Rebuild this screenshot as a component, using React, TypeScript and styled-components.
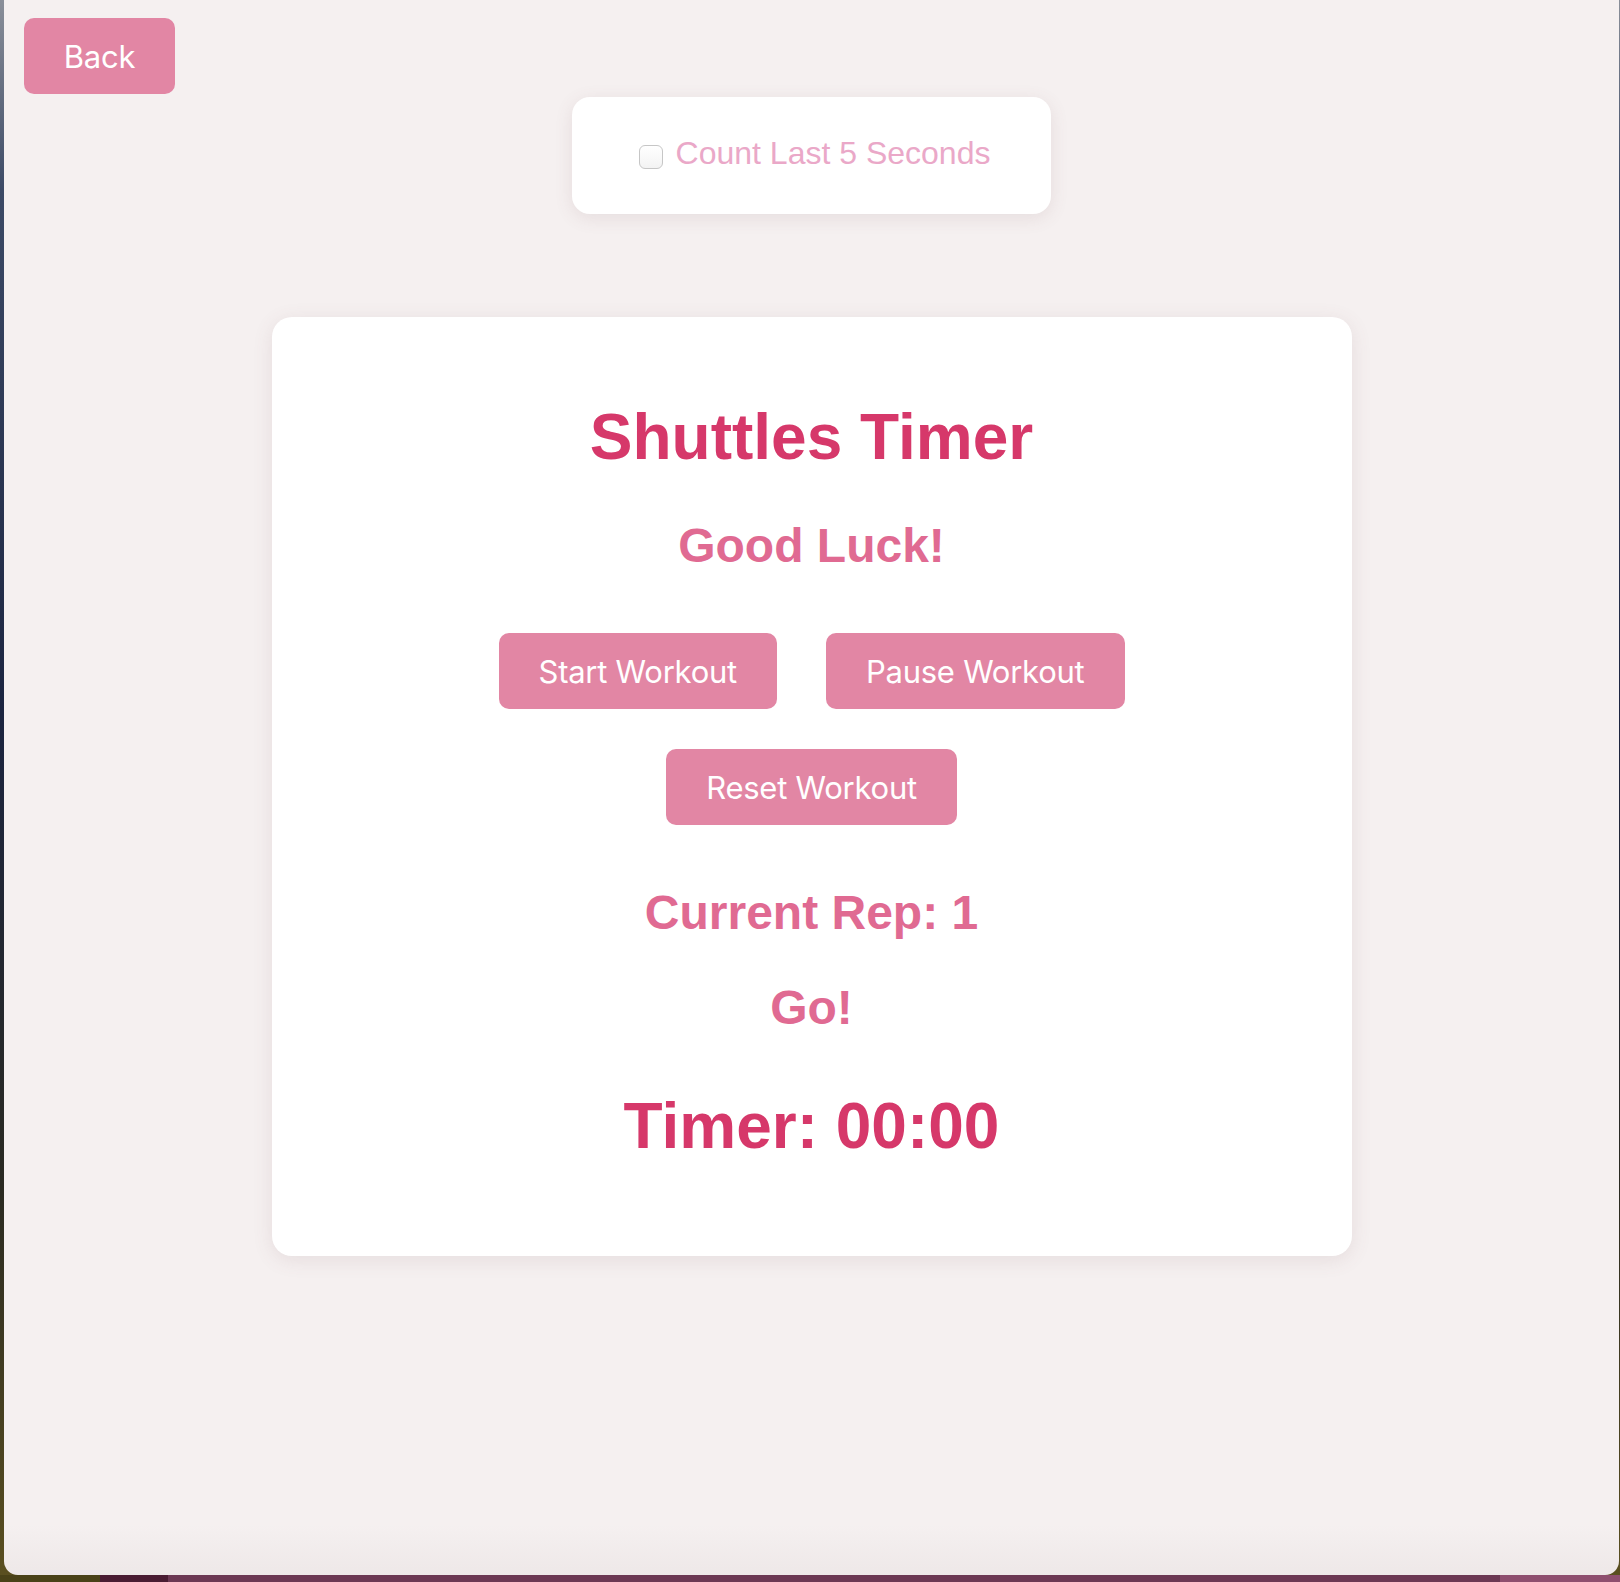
import React from "react";
import styled, { createGlobalStyle } from "styled-components";

const GlobalStyle = createGlobalStyle`
  html, body {
    margin: 0;
    padding: 0;
    background: #1c2438;
  }
  #root {
    min-height: 1582px;
  }
  * { box-sizing: border-box; }
`;

const Desktop = styled.div`
  display: flex;
  flex-direction: column;
  min-height: 1582px;
  background: linear-gradient(
    to bottom,
    #8a8f99 0%,
    #3c4a66 12%,
    #1b2440 45%,
    #2a2a22 75%,
    #5b5020 100%
  );
`;

const Window = styled.div`
  flex: 1;
  display: flex;
  flex-direction: column;
  margin-left: 4px;
  margin-right: 1px;
  padding: 18px 20px 0;
  border-radius: 0 0 14px 14px;
  background: linear-gradient(
    to bottom,
    #f5f0f0 0%,
    #f5f0f0 calc(100% - 50px),
    #eee8e8 100%
  );
`;

const StatusBar = styled.div`
  display: flex;
  height: 7px;
`;

const StatusSegment = styled.div<{ $w?: number; $bg: string }>`
  flex: ${(p) => (p.$w ? `0 0 ${p.$w}px` : "1")};
  background: ${(p) => p.$bg};
`;

const PinkButton = styled.button`
  height: 76px;
  padding: 0 40px;
  border: none;
  border-radius: 10px;
  background: #e286a4;
  color: #ffffff;
  font-family: "Inter", "Noto Sans", sans-serif;
  font-size: 31px;
  font-weight: 400;
  letter-spacing: -0.25px;
  line-height: 78px;
  cursor: pointer;
  white-space: nowrap;
`;

const BackButton = styled(PinkButton)`
  align-self: flex-start;
  width: 151px;
  padding: 0;
`;

const SettingsCard = styled.div`
  align-self: center;
  display: flex;
  align-items: center;
  margin-top: 3px;
  padding: 38px 61px 42px 67px;
  background: #ffffff;
  border-radius: 18px;
  box-shadow: 0 4px 18px rgba(120, 80, 90, 0.12);
`;

const CheckBox = styled.input`
  appearance: none;
  -webkit-appearance: none;
  width: 24px;
  height: 24px;
  margin: 7px 13px 0 0;
  border: 1px solid #c6c6c6;
  border-radius: 6px;
  background: linear-gradient(#ffffff, #f3f3f3);
`;

const CheckLabel = styled.label`
  font-family: "Liberation Sans", Arial, sans-serif;
  font-size: 32px;
  line-height: 37px;
  color: #eaa8c8;
`;

const TimerCard = styled.div`
  align-self: center;
  width: 1080px;
  margin-top: 103px;
  padding: 84px 40px 92px;
  display: flex;
  flex-direction: column;
  align-items: center;
  background: #ffffff;
  border-radius: 20px;
  box-shadow: 0 4px 20px rgba(120, 80, 90, 0.12);
`;

const BigHeading = styled.h1<{ $mt?: number }>`
  margin: ${(p) => p.$mt ?? 0}px 0 0;
  font-family: "Liberation Sans", Arial, sans-serif;
  font-weight: 700;
  font-size: 64px;
  line-height: 1.15;
  color: #d6386a;
`;

const SubHeading = styled.h2<{ $mt: number }>`
  margin: ${(p) => p.$mt}px 0 0;
  font-family: "Liberation Sans", Arial, sans-serif;
  font-weight: 700;
  font-size: 48px;
  line-height: 1.15;
  color: #e06a92;
`;

const ButtonGroup = styled.div`
  margin-top: 60px;
  display: flex;
  flex-direction: column;
  align-items: center;
  gap: 40px;
`;

const ButtonRow = styled.div`
  display: flex;
  justify-content: center;
  gap: 49px;
`;

export default function App() {
  return (
    <>
      <GlobalStyle />
      <Desktop>
        <Window>
          <BackButton>Back</BackButton>
          <SettingsCard>
            <CheckBox type="checkbox" id="count-last" />
            <CheckLabel htmlFor="count-last">Count Last 5 Seconds</CheckLabel>
          </SettingsCard>
          <TimerCard>
            <BigHeading>Shuttles Timer</BigHeading>
            <SubHeading $mt={43}>Good Luck!</SubHeading>
            <ButtonGroup>
              <ButtonRow>
                <PinkButton>Start Workout</PinkButton>
                <PinkButton>Pause Workout</PinkButton>
              </ButtonRow>
              <ButtonRow>
                <PinkButton>Reset Workout</PinkButton>
              </ButtonRow>
            </ButtonGroup>
            <SubHeading $mt={60}>Current Rep: 1</SubHeading>
            <SubHeading $mt={40}>Go!</SubHeading>
            <BigHeading $mt={55}>Timer: 00:00</BigHeading>
          </TimerCard>
        </Window>
        <StatusBar>
          <StatusSegment $w={100} $bg="#4a4218" />
          <StatusSegment $w={68} $bg="#4a1c32" />
          <StatusSegment $bg="#6c3853" />
          <StatusSegment $w={120} $bg="#8e4e6e" />
        </StatusBar>
      </Desktop>
    </>
  );
}
